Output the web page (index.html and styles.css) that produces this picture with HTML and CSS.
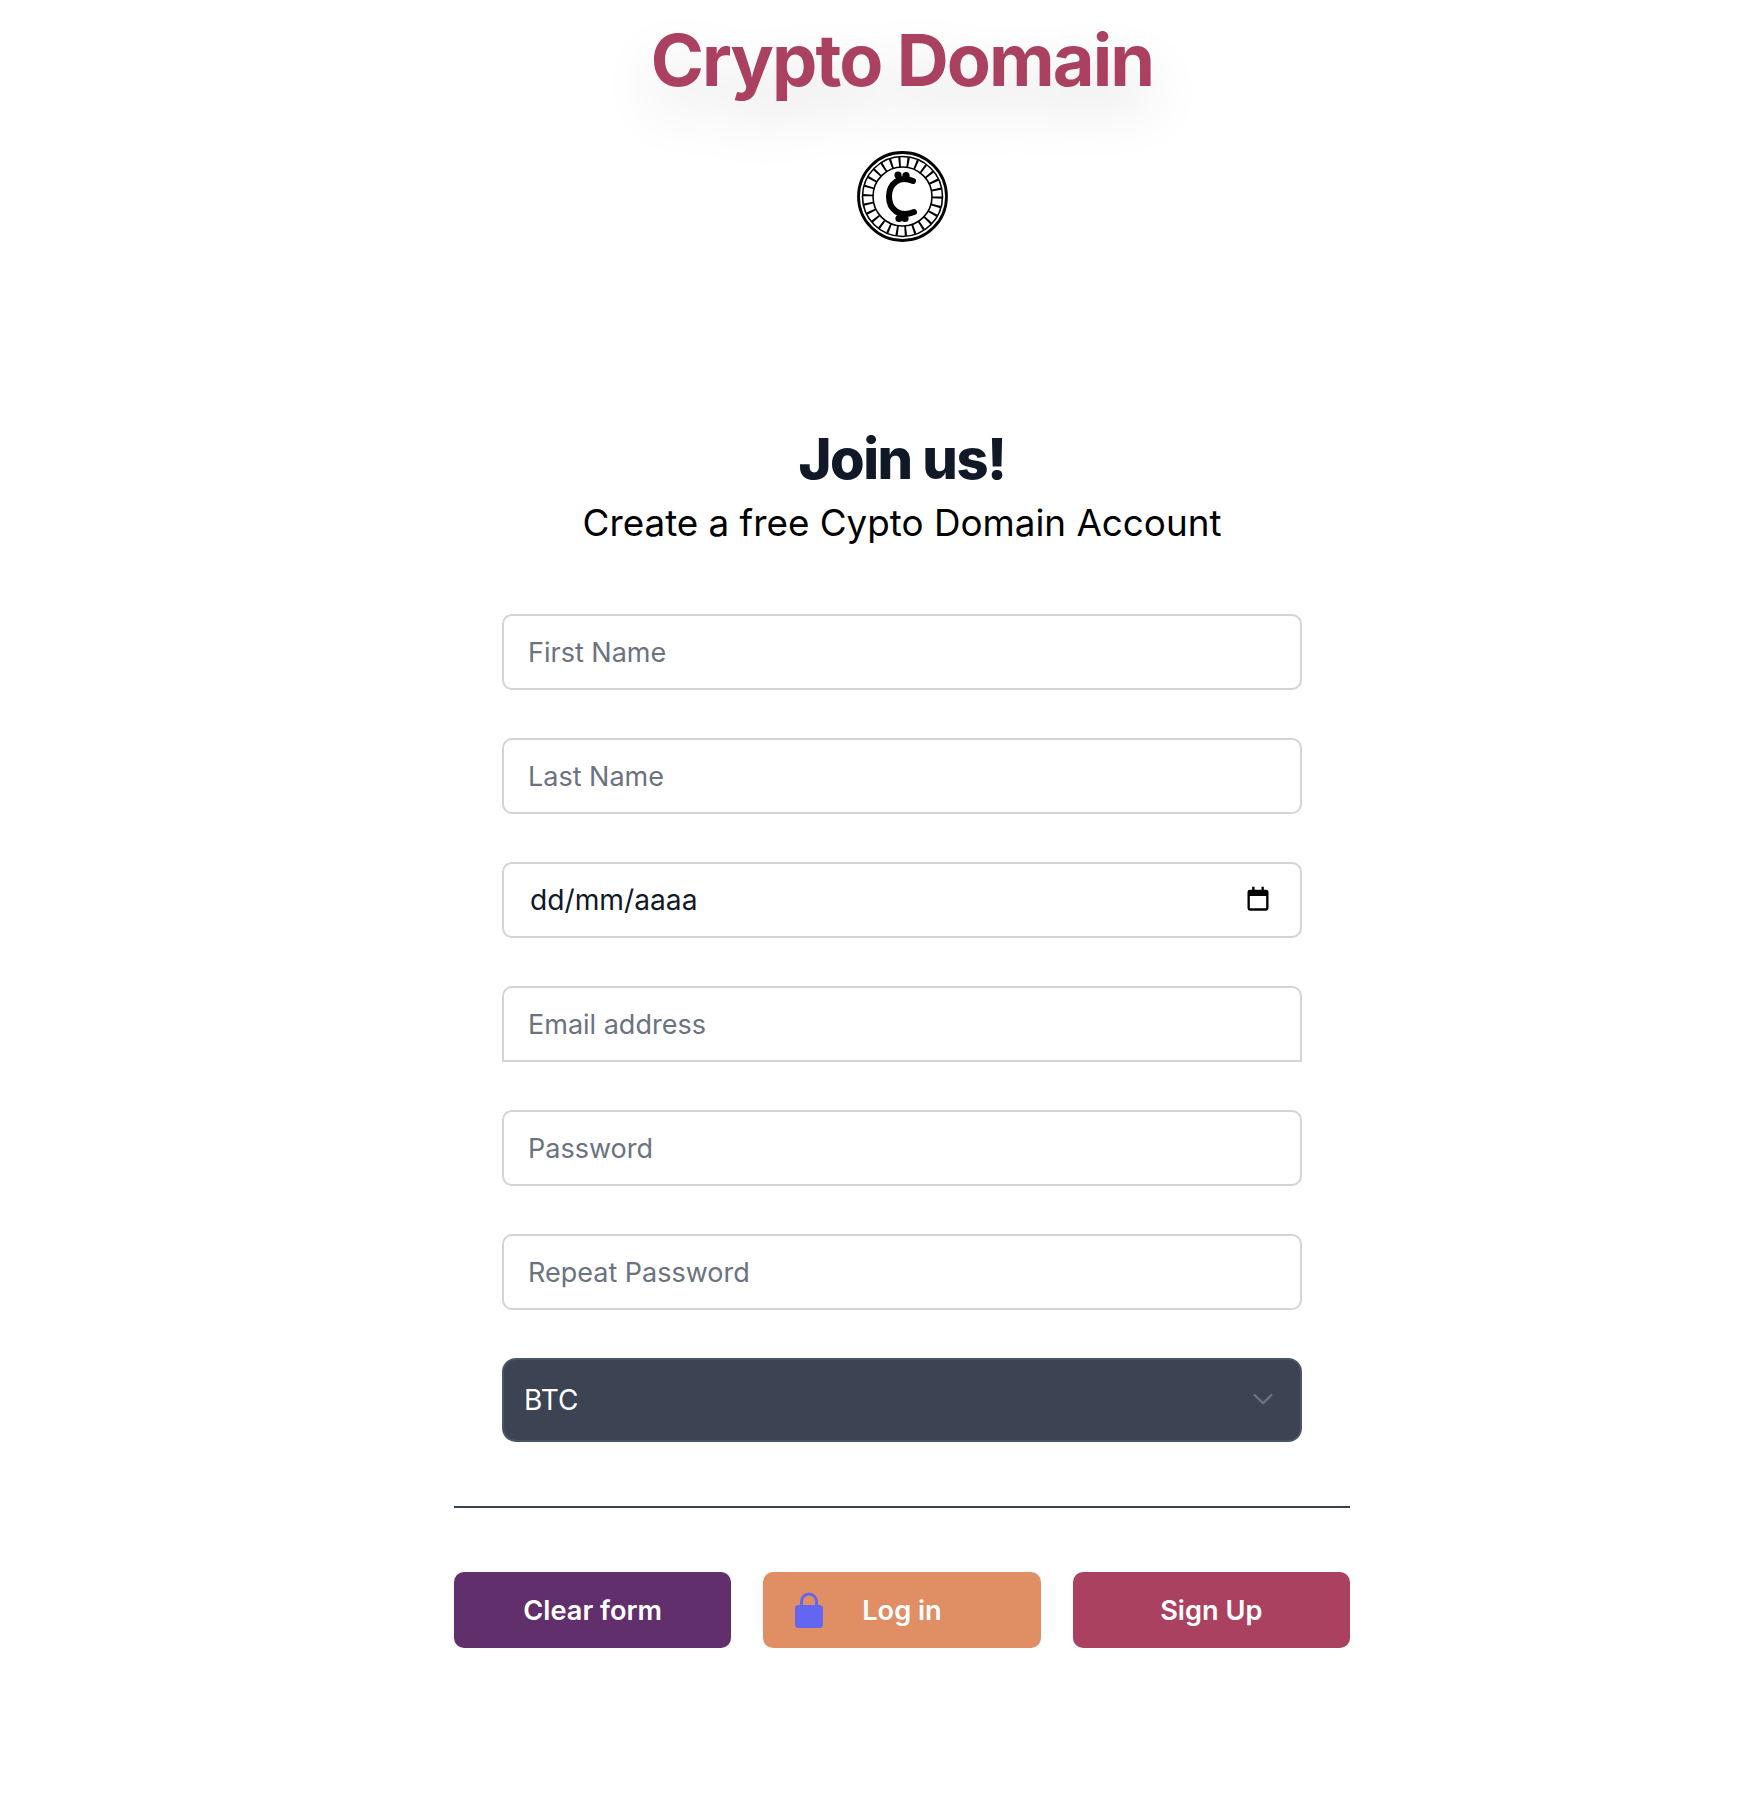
FILE: index.html
```html
<!DOCTYPE html>
<html lang="en">
<head>
  <meta charset="utf-8">
  <meta name="viewport" content="width=device-width, initial-scale=1">
  <title>Crypto Domain</title>
  <link rel="stylesheet" href="styles.css">
</head>
<body>
  <header class="brand">
    <h1 class="brand-title">Crypto Domain</h1>
    <svg class="brand-logo" viewBox="0 0 91 91" fill="none" stroke="#000">
      <circle cx="45.5" cy="45.5" r="44" stroke-width="2.8"/>
      <circle cx="45.5" cy="45.5" r="40" stroke-width="1.6"/>
      <circle cx="45.5" cy="45.5" r="34.5" stroke-width="10" stroke-dasharray="2 6.34"/>
      <circle cx="45.5" cy="45.5" r="29.5" stroke-width="1.6"/>
      <path d="M56 30C42 24 32 33 32 45.5C32 58 42 67 57 61" stroke-width="6" stroke-linecap="round"/>
      <g fill="#000" stroke="none">
        <circle cx="41" cy="24" r="3.6"/>
        <circle cx="49" cy="24.5" r="3.6"/>
        <circle cx="42" cy="67.5" r="3.6"/>
        <circle cx="48" cy="67.5" r="3.6"/>
      </g>
    </svg>
  </header>

  <main class="signup">
    <h2 class="signup-title">Join us!</h2>
    <p class="signup-sub">Create a free Cypto Domain Account</p>

    <form class="signup-form">
      <div class="fields">
        <input class="field" type="text" placeholder="First Name">
        <input class="field" type="text" placeholder="Last Name">
        <div class="date-wrap">
          <input class="field field-date" type="text" value="dd/mm/aaaa">
          <svg class="date-icon" viewBox="0 0 24 24" fill="#000">
            <path d="M7 1.5h2V4h6V1.5h2V4h2a2 2 0 0 1 2 2v14a2 2 0 0 1-2 2H5a2 2 0 0 1-2-2V6a2 2 0 0 1 2-2h2V1.5ZM5 9.5V20h14V9.5H5Z"/>
          </svg>
        </div>
        <input class="field field-square" type="email" placeholder="Email address">
        <input class="field" type="password" placeholder="Password">
        <input class="field" type="password" placeholder="Repeat Password">
        <div class="coin-wrap">
          <select class="coin">
            <option>BTC</option>
            <option>ETH</option>
          </select>
          <svg class="coin-arrow" viewBox="0 0 20 12" fill="none" stroke="#6b7280" stroke-width="2.4">
            <path d="M1 1.5l9 8.5 9-8.5"/>
          </svg>
        </div>
      </div>

      <hr class="rule">

      <div class="actions">
        <button class="btn btn-clear" type="reset">Clear form</button>
        <button class="btn btn-login" type="button">
          <svg class="btn-lock" viewBox="0 0 28 36" fill="#6366f1">
            <path d="M5 14V9.5a9 9 0 0 1 18 0V14h-3V9.5a6 6 0 0 0-12 0V14H5Z"/>
            <rect y="13" width="28" height="23" rx="3.5"/>
          </svg>
          Log in
        </button>
        <button class="btn btn-signup" type="submit">Sign Up</button>
      </div>
    </form>
  </main>
</body>
</html>
```

FILE: styles.css
```css
* { box-sizing: border-box; }

html { overflow-x: hidden; }

/* the page sits right of the window's centre */
body {
  width: 1804px;
  margin: 0;
  min-height: 1798px;
  background: #fff;
  font-family: Inter, "Liberation Sans", sans-serif;
}

.brand {
  display: flex;
  flex-direction: column;
  align-items: center;
  padding-top: 16px;
}

.brand-title {
  margin: 0;
  font-size: 72px;
  line-height: 88px;
  font-weight: 700;
  letter-spacing: -1.9px;
  color: #ab4160;
  filter: drop-shadow(0 25px 25px rgba(0, 0, 0, .12));
}

.brand-logo {
  width: 91px;
  height: 91px;
  margin-top: 47px;
}

.signup {
  width: 896px;
  margin: 183px auto 0;
  text-align: center;
}

.signup-title {
  margin: 0;
  font-size: 56px;
  line-height: 68px;
  font-weight: 800;
  letter-spacing: -1.5px;
  color: #111827;
}

.signup-sub {
  margin: 2px 0 0;
  font-size: 36.8px;
  line-height: 56px;
  color: #000;
}

.signup-form { margin-top: 63px; }

.fields {
  display: flex;
  flex-direction: column;
  gap: 48px;
  padding: 0 48px;
}

.field {
  display: block;
  width: 100%;
  height: 76px;
  padding: 0 24px;
  border: 2px solid #d1d5db;
  border-radius: 10px;
  background: #fff;
  font: 400 27px Inter, "Liberation Sans", sans-serif;
  color: #111827;
  outline: none;
}

.field::placeholder { color: #6b7280; opacity: 1; }

.field-square { border-radius: 10px 10px 0 0; }

.field-date { padding-left: 26px; font-size: 28.2px; }

.date-wrap, .coin-wrap { position: relative; }

.date-icon {
  position: absolute;
  top: 23px;
  right: 30px;
  width: 28px;
  height: 28px;
}

.coin {
  display: block;
  width: 100%;
  height: 84px;
  padding: 0 20px;
  border: 2px solid #4b5563;
  border-radius: 14px;
  background: #3c4353;
  font: 400 28px Inter, "Liberation Sans", sans-serif;
  color: #fff;
  appearance: none;
  outline: none;
}

.coin-arrow {
  position: absolute;
  top: 35px;
  right: 29px;
  width: 20px;
  height: 12px;
}

.rule {
  height: 2px;
  margin: 64px 0 0;
  border: 0;
  background: #374151;
}

.actions {
  display: grid;
  grid-template-columns: repeat(3, 1fr);
  gap: 32px;
  margin-top: 64px;
}

.btn {
  position: relative;
  height: 76px;
  border: 0;
  border-radius: 10px;
  font: 600 27.2px Inter, "Liberation Sans", sans-serif;
  color: #fff;
}

.btn-clear { background: #622f6d; }
.btn-login { background: #e08e64; }
.btn-signup { background: #ab4160; }

.btn-lock {
  position: absolute;
  top: 20px;
  left: 32px;
  width: 28px;
  height: 36px;
}
```
